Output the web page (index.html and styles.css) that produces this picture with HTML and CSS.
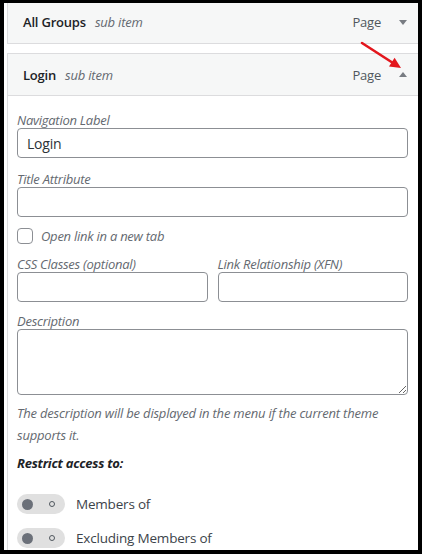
FILE: index.html
```html
<!DOCTYPE html>
<html>
<head>
<meta charset="utf-8">
<link rel="stylesheet" href="styles.css">
</head>
<body>
<div class="menu">
  <div class="item-bar first">
    <div class="item-title"><span class="name">All Groups</span><span class="sub">sub item</span></div>
    <div class="item-controls"><span class="type">Page</span>
      <svg class="tri" width="8" height="5" viewBox="0 0 8 5"><polygon points="0,0 8,0 4,5" fill="#787c82"/></svg>
    </div>
  </div>
  <div class="item-bar open">
    <div class="item-title"><span class="name">Login</span><span class="sub">sub item</span></div>
    <div class="item-controls"><span class="type">Page</span>
      <svg class="tri" width="8" height="5" viewBox="0 0 8 5"><polygon points="0,5 8,5 4,0" fill="#787c82"/></svg>
    </div>
  </div>
  <div class="settings">
    <label class="field">
      <span class="lbl">Navigation Label</span>
      <input class="txt" type="text" value="Login">
    </label>
    <label class="field f2">
      <span class="lbl">Title Attribute</span>
      <input class="txt" type="text">
    </label>
    <label class="check-row">
      <span class="checkbox"></span>
      <span class="check-lbl">Open link in a new tab</span>
    </label>
    <div class="two-col">
      <label class="field">
        <span class="lbl">CSS Classes (optional)</span>
        <input class="txt" type="text">
      </label>
      <label class="field">
        <span class="lbl">Link Relationship (XFN)</span>
        <input class="txt" type="text">
      </label>
    </div>
    <label class="field f4">
      <span class="lbl">Description</span>
      <textarea class="area"></textarea>
    </label>
    <p class="help">The description will be displayed in the menu if the current theme supports it.</p>
    <p class="restrict">Restrict access to:</p>
    <div class="toggle-row first-toggle">
      <span class="toggle"><span class="knob"></span><span class="ring"></span></span>
      <span class="toggle-lbl">Members of</span>
    </div>
    <div class="toggle-row second-toggle">
      <span class="toggle"><span class="knob"></span><span class="ring"></span></span>
      <span class="toggle-lbl">Excluding Members of</span>
    </div>
  </div>
</div>
<svg class="arrow" width="424" height="100" viewBox="0 0 424 100">
  <line x1="362" y1="43" x2="393" y2="63" stroke="#e3161d" stroke-width="2.6" stroke-linecap="round"/>
  <polygon points="401,68 389,66.6 394.6,57.8" fill="#e3161d"/>
</svg>
<div class="frame"></div>
</body>
</html>
```
FILE: styles.css
```css
html, body {
  margin: 0;
  padding: 0;
  background: #ffffff;
}
body {
  font-family: "Open Sans", "Noto Sans", "Liberation Sans", sans-serif;
  color: #1d2327;
  font-size: 13px;
  position: relative;
  width: 424px;
  height: 558px;
  overflow: hidden;
}
.menu {
  margin-left: 7px;
  width: 412px;
}
.item-bar {
  box-sizing: border-box;
  height: 44px;
  border: 1px solid #dcdcde;
  background: #f6f7f7;
  display: flex;
  align-items: center;
  justify-content: space-between;
  padding: 0 11px 0 15px;
}
.item-bar.first {
  height: 44px;
}
.item-bar.open {
  margin-top: 9px;
  height: 43px;
}
.item-title {
  display: flex;
  align-items: baseline;
  gap: 9px;
}
.name {
  font-weight: 600;
  font-size: 13px;
  color: #1d2327;
  letter-spacing: -0.2px;
}
.sub {
  font-style: italic;
  color: #646970;
  font-size: 13px;
  letter-spacing: -0.2px;
}
.item-controls {
  display: flex;
  align-items: center;
  gap: 18px;
}
.type {
  color: #50575e;
  font-size: 13px;
  letter-spacing: -0.2px;
}
.tri {
  display: block;
}
.settings {
  box-sizing: border-box;
  border: 1px solid #dcdcde;
  border-top: none;
  padding: 16px 10px 4px 9px;
  background: #fff;
}
.field {
  display: block;
}
.lbl {
  display: block;
  font-style: italic;
  color: #646970;
  font-size: 13px;
  line-height: 16px;
  letter-spacing: -0.25px;
}
.txt {
  display: block;
  box-sizing: border-box;
  width: 100%;
  height: 30px;
  margin: 0;
  border: 1px solid #8c8f94;
  border-radius: 4px;
  padding: 0 9px;
  font-family: "Open Sans", "Noto Sans", sans-serif;
  font-size: 14px;
  color: #2c3338;
  background: #fff;
  outline: none;
  letter-spacing: -0.2px;
}
.f2 {
  margin-top: 13px;
}
.check-row {
  display: flex;
  align-items: center;
  gap: 8px;
  margin-top: 11px;
  height: 16px;
}
.checkbox {
  box-sizing: border-box;
  width: 16px;
  height: 16px;
  border: 1px solid #8c8f94;
  border-radius: 4px;
  background: #fff;
}
.check-lbl {
  font-style: italic;
  color: #646970;
  font-size: 13px;
  letter-spacing: -0.25px;
}
.two-col {
  display: grid;
  grid-template-columns: 1fr 1fr;
  column-gap: 10px;
  margin-top: 12px;
}
.f4 {
  margin-top: 11px;
}
.area {
  display: block;
  box-sizing: border-box;
  width: 100%;
  height: 66px;
  margin: 0;
  border: 1px solid #8c8f94;
  border-radius: 4px;
  resize: both;
  background: #fff;
  outline: none;
}
.help {
  margin: 7px 0 0 0;
  font-style: italic;
  color: #646970;
  font-size: 13px;
  line-height: 22px;
  letter-spacing: -0.2px;
}
.restrict {
  margin: 6px 0 0 0;
  font-style: italic;
  font-weight: 700;
  font-size: 13px;
  line-height: 22px;
  color: #1d2327;
  letter-spacing: -0.25px;
}
.toggle-row {
  display: flex;
  align-items: center;
  gap: 11px;
  height: 20px;
}
.first-toggle {
  margin-top: 20px;
}
.second-toggle {
  margin-top: 14px;
}
.toggle {
  position: relative;
  width: 48px;
  height: 20px;
  border-radius: 10px;
  background: #e0e0e0;
  flex: none;
}
.knob {
  position: absolute;
  left: 5px;
  top: 4.5px;
  width: 11px;
  height: 11px;
  border-radius: 50%;
  background: #6b7079;
}
.ring {
  position: absolute;
  left: 32px;
  top: 7px;
  width: 6px;
  height: 6px;
  box-sizing: border-box;
  border: 1.3px solid #50575e;
  border-radius: 50%;
}
.toggle-lbl {
  font-size: 13.5px;
  color: #3c434a;
  letter-spacing: -0.2px;
}
.arrow {
  position: absolute;
  left: 0;
  top: 0;
  pointer-events: none;
}
.frame {
  position: absolute;
  left: 0;
  top: 0;
  width: 422px;
  height: 554px;
  box-sizing: border-box;
  border-style: solid;
  border-color: #000;
  border-width: 3px 4px 4px 4px;
  pointer-events: none;
}
```
